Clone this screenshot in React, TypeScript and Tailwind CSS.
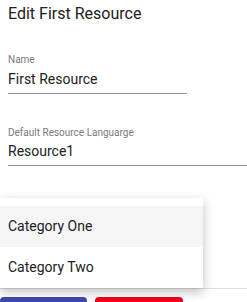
export default function App() {
    return (
        <div className="w-[247px] h-[302px] overflow-hidden bg-white font-['Roboto',sans-serif] text-[#212121]">
            <h2 className="px-2 pt-[3px] text-[16px] leading-[22px]">Edit First Resource</h2>

            <div className="pl-2 mt-[28px]">
                <div className="w-[179px] border-b border-[#949494]">
                    <label className="block text-[10px] leading-[14px] text-[#7a7a7a]">Name</label>
                    <div className="text-[14px] leading-[20px] pt-[2px] pb-[4px]">First Resource</div>
                </div>
            </div>

            <div className="pl-2 mt-[32px]">
                <div className="border-b border-[#949494]">
                    <label className="block text-[10px] leading-[14px] text-[#7a7a7a]">Default Resource Languarge</label>
                    <div className="text-[14px] leading-[20px] pt-[1px] pb-[4px]">Resource1</div>
                </div>
            </div>

            <div className="relative mt-[32px] border-b border-[#e0e0e0]">
                <ul className="w-[203px] bg-white pt-2 shadow-[0_4px_10px_rgba(0,0,0,0.25)] text-[14px]">
                    <li className="h-[41px] flex items-center px-2 bg-[#f5f5f5]">Category One</li>
                    <li className="h-[41px] flex items-center px-2">Category Two</li>
                </ul>
            </div>

            <div className="flex gap-[8px] mt-[8px]">
                <button type="button" className="w-[87px] h-[30px] bg-[#3f48b0] rounded-t"></button>
                <button type="button" className="w-[88px] h-[30px] bg-[#f0001a] rounded-t"></button>
            </div>
        </div>
    );
}
